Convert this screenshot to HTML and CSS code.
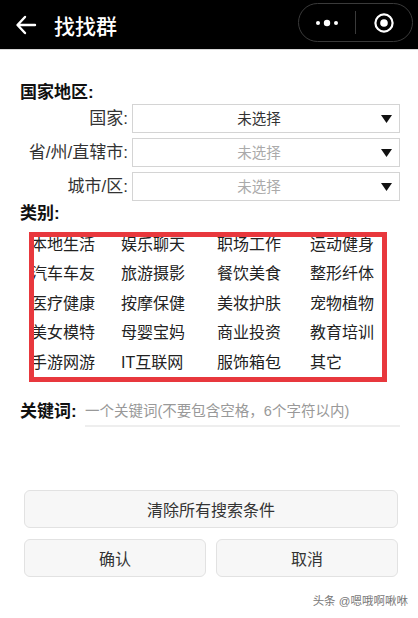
FILE: index.html
```html
<!DOCTYPE html>
<html lang="zh-CN">
<head>
    <meta charset="UTF-8">
    <meta name="viewport" content="width=device-width, initial-scale=1.0">
    <title>找找群</title>
    <link rel="stylesheet" href="styles.css">
</head>
<body>
    <!-- 顶部导航 -->
    <div class="nav">
        <svg class="back" width="22" height="20" viewBox="0 0 22 20">
            <path d="M20 10H3M10 2L2.5 10L10 18" fill="none" stroke="#fff" stroke-width="2.4" stroke-linecap="round" stroke-linejoin="round"/>
        </svg>
        <span class="nav-title">找找群</span>
        <div class="capsule">
            <div class="cap-btn">
                <svg width="24" height="8" viewBox="0 0 24 8">
                    <circle cx="3" cy="4" r="2" fill="#fff"/>
                    <circle cx="12" cy="4" r="3.2" fill="#fff"/>
                    <circle cx="21" cy="4" r="2" fill="#fff"/>
                </svg>
            </div>
            <div class="cap-line"></div>
            <div class="cap-btn">
                <svg width="22" height="22" viewBox="0 0 22 22">
                    <circle cx="11" cy="11" r="8.6" fill="none" stroke="#fff" stroke-width="2.2"/>
                    <circle cx="11" cy="11" r="3.8" fill="#fff"/>
                </svg>
            </div>
        </div>
    </div>

    <div class="page">
        <div class="section-title area-title">国家地区:</div>
        <div class="area">
            <label class="area-label">国家:</label>
            <div class="picker">
                <span class="picker-text">未选择</span>
                <svg class="picker-arrow" width="11" height="8" viewBox="0 0 11 8"><path d="M0 0H11L5.5 8Z" fill="#111"/></svg>
            </div>
            <label class="area-label">省/州/直辖市:</label>
            <div class="picker">
                <span class="picker-text empty">未选择</span>
                <svg class="picker-arrow" width="11" height="8" viewBox="0 0 11 8"><path d="M0 0H11L5.5 8Z" fill="#111"/></svg>
            </div>
            <label class="area-label">城市/区:</label>
            <div class="picker">
                <span class="picker-text empty">未选择</span>
                <svg class="picker-arrow" width="11" height="8" viewBox="0 0 11 8"><path d="M0 0H11L5.5 8Z" fill="#111"/></svg>
            </div>
        </div>

        <div class="section-title">类别:</div>
        <div class="type-box">
            <div class="type-grid">
                <span>本地生活</span><span>娱乐聊天</span><span>职场工作</span><span>运动健身</span>
                <span>汽车车友</span><span>旅游摄影</span><span>餐饮美食</span><span>整形纤体</span>
                <span>医疗健康</span><span>按摩保健</span><span>美妆护肤</span><span>宠物植物</span>
                <span>美女模特</span><span>母婴宝妈</span><span>商业投资</span><span>教育培训</span>
                <span>手游网游</span><span>IT互联网</span><span>服饰箱包</span><span>其它</span>
            </div>
        </div>

        <div class="keyword">
            <span class="section-title">关键词:</span>
            <input class="keyword-input" type="text" placeholder="一个关键词(不要包含空格，6个字符以内)">
        </div>

        <div class="btns">
            <button class="btn">清除所有搜索条件</button>
            <div class="btn-row">
                <button class="btn">确认</button>
                <button class="btn">取消</button>
            </div>
        </div>

        <div class="mark">头条 @嗯哦啊啾咻</div>
    </div>
</body>
</html>
```

FILE: styles.css
```css
/* 全局 */
body {
    margin: 0;
    font-family: 'Liberation Sans', 'Noto Sans CJK SC', sans-serif;
    color: #222;
    background: #fff;
}

/* 导航栏 */
.nav {
    height: 49px;
    background: #000;
    border-bottom: 1px solid #d8d8d8;
    display: flex;
    align-items: center;
    padding: 0 5px 0 15px;
}

.back {
    margin-right: 17px;
}

.nav-title {
    color: #fff;
    font-size: 21px;
    font-weight: 500;
    flex: 1;
}

.capsule {
    width: 115px;
    height: 39px;
    border: 1px solid #3a3a3a;
    border-radius: 20px;
    display: flex;
    align-items: center;
    box-sizing: border-box;
    margin-top: -4px;
}

.cap-btn {
    flex: 1;
    display: flex;
    justify-content: center;
    align-items: center;
}

.cap-line {
    width: 1px;
    height: 23px;
    background: #3a3a3a;
}

.page {
    padding: 0 18px 0 20px;
}

.section-title {
    font-size: 17px;
    font-weight: bold;
    line-height: 20px;
    color: #111;
}

.area-title {
    margin-top: 33px;
}

/* 地区选择 */
.area {
    display: grid;
    grid-template-columns: 108px 268px;
    column-gap: 4px;
    row-gap: 5px;
    margin-top: 1px;
    margin-bottom: 3px;
}

.area-label {
    text-align: right;
    font-size: 17px;
    line-height: 29px;
    color: #333;
}

.picker {
    height: 29px;
    border: 1px solid #d4d4d4;
    box-sizing: border-box;
    display: flex;
    align-items: center;
}

.picker-text {
    flex: 1;
    text-align: center;
    font-size: 14.5px;
    color: #333;
    padding-left: 10px;
    margin-top: -2px;
}

.picker-text.empty {
    color: #aaa;
}

.picker-arrow {
    margin: 0 7px 0 6px;
}

/* 类别 */
.type-box {
    width: 358px;
    height: 150px;
    box-sizing: border-box;
    border: 5px solid #e8383d;
    margin: 8px 0 0 9px;
    overflow: hidden;
}

.type-grid {
    display: grid;
    grid-template-columns: 90px 96px 93px auto;
    grid-auto-rows: 29.5px;
    align-items: center;
    margin: -9px 0 0 -3px;
    font-size: 16px;
    color: #222;
    white-space: nowrap;
}

/* 关键词 */
.keyword {
    display: flex;
    align-items: center;
    margin-top: 15px;
}

.keyword .section-title {
    width: 65px;
}

.keyword-input {
    flex: 1;
    border: none;
    border-bottom: 2px solid #eee;
    outline: none;
    padding: 4px 0;
    line-height: 20px;
    font-family: inherit;
    font-size: 14.5px;
}

.keyword-input::placeholder {
    color: #999;
}

/* 按钮 */
.btns {
    margin: 63px 2px 0 4px;
    display: flex;
    flex-direction: column;
    gap: 11px;
}

.btn-row {
    display: flex;
    gap: 10px;
}

.btn {
    height: 38px;
    background: #f7f7f7;
    border: 1px solid #e2e2e2;
    border-radius: 6px;
    font-family: inherit;
    font-size: 16px;
    color: #333;
}

.btn-row .btn {
    flex: 1;
}

.mark {
    text-align: right;
    font-size: 11.5px;
    color: #777;
    margin-top: 15px;
    margin-right: -8px;
}
```
